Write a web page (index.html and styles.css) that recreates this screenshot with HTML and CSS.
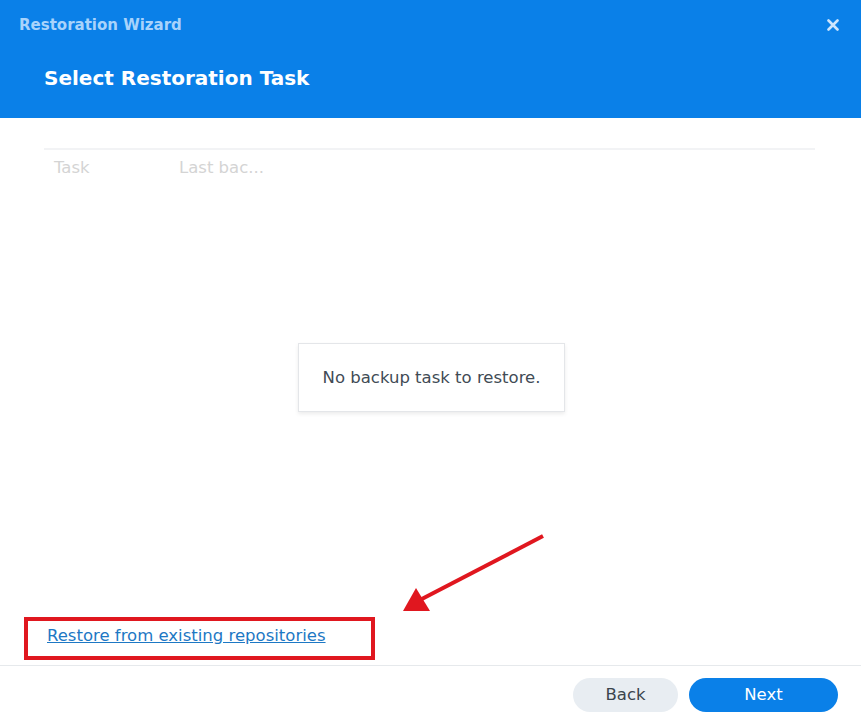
FILE: index.html
```html
<!DOCTYPE html>
<html lang="en">
<head>
<meta charset="UTF-8">
<title>Restoration Wizard</title>
<link rel="stylesheet" href="styles.css">
</head>
<body>
<div class="dialog">
    <div class="header">
        <div class="topbar">
            <div class="window-title">Restoration Wizard</div>
            <svg class="close" width="12" height="12" viewBox="0 0 12 12">
                <path d="M1.5 1.5 L10.5 10.5 M10.5 1.5 L1.5 10.5" stroke="#cde5fd" stroke-width="2.6" stroke-linecap="round"/>
            </svg>
        </div>
        <div class="step-title">Select Restoration Task</div>
    </div>

    <div class="content">
        <div class="grid">
            <div class="grid-head">
                <div class="col col-task">Task</div>
                <div class="col col-last">Last bac...</div>
            </div>
        </div>

        <div class="empty-mask">No backup task to restore.</div>

        <div class="link-row">
            <div class="highlight">
                <a href="#" class="link">Restore from existing repositories</a>
            </div>
        </div>

        <!-- annotation arrow -->
        <svg class="arrow" width="861" height="547" viewBox="0 0 861 547">
            <line x1="543" y1="418" x2="418" y2="483" stroke="#e0171f" stroke-width="4"/>
            <polygon points="403,493 416,470 430,493" fill="#e0171f"/>
        </svg>
    </div>

    <div class="footer">
        <button class="btn btn-back">Back</button>
        <button class="btn btn-next">Next</button>
    </div>
</div>
</body>
</html>
```

FILE: styles.css
```css
body {
    margin: 0;
    padding: 0;
    font-family: "DejaVu Sans", Verdana, sans-serif;
    background-color: #fff;
}

.dialog {
    width: 861px;
    height: 720px;
    display: flex;
    flex-direction: column;
    overflow: hidden;
}

.header {
    height: 118px;
    background-color: #0a80e8;
    padding: 0 22px 0 19px;
    box-sizing: border-box;
}

.topbar {
    height: 49px;
    display: flex;
    align-items: center;
    justify-content: space-between;
}

.window-title {
    font-size: 15px;
    font-weight: bold;
    color: #a8d3fb;
}

.close {
    display: block;
}

.step-title {
    padding-left: 25px;
    height: 58px;
    line-height: 58px;
    font-size: 20px;
    font-weight: bold;
    color: #fff;
}

.content {
    flex: 1;
    position: relative;
    display: flex;
    flex-direction: column;
}

.grid {
    flex: 1;
    padding: 30px 46px 0 44px;
}

.grid-head {
    display: flex;
    border-top: 2px solid #f2f3f5;
    height: 34px;
    align-items: center;
}

.col {
    font-size: 16.5px;
    color: #d4d4d4;
    padding-left: 10px;
}

.col-task {
    width: 115px;
}

.empty-mask {
    position: absolute;
    left: 298px;
    top: 225px;
    width: 267px;
    height: 69px;
    box-sizing: border-box;
    border: 1px solid #e4e6e9;
    box-shadow: 0 2px 4px rgba(0, 0, 0, 0.08);
    background-color: #fff;
    display: flex;
    align-items: center;
    justify-content: center;
    font-size: 16.5px;
    color: #414b55;
}

.link-row {
    padding: 0 0 5px 24px;
}

.highlight {
    width: 351px;
    height: 43px;
    box-sizing: border-box;
    border: 4px solid #e0171f;
    padding: 5px 0 0 19px;
}

.link {
    font-size: 16.5px;
    color: #1d78c4;
    text-decoration: underline;
}

.arrow {
    position: absolute;
    left: 0;
    top: 0;
    pointer-events: none;
}

.footer {
    height: 55px;
    border-top: 1px solid #e6e9ec;
    box-sizing: border-box;
    display: flex;
    justify-content: flex-end;
    align-items: center;
    gap: 11px;
    padding: 3px 23px 0 0;
}

.btn {
    height: 34px;
    border: none;
    border-radius: 17px;
    font-family: "DejaVu Sans", Verdana, sans-serif;
    font-size: 16.5px;
    cursor: pointer;
}

.btn-back {
    width: 105px;
    background-color: #e8edf2;
    color: #3b444d;
}

.btn-next {
    width: 149px;
    background-color: #0a80e8;
    color: #fff;
}
```
